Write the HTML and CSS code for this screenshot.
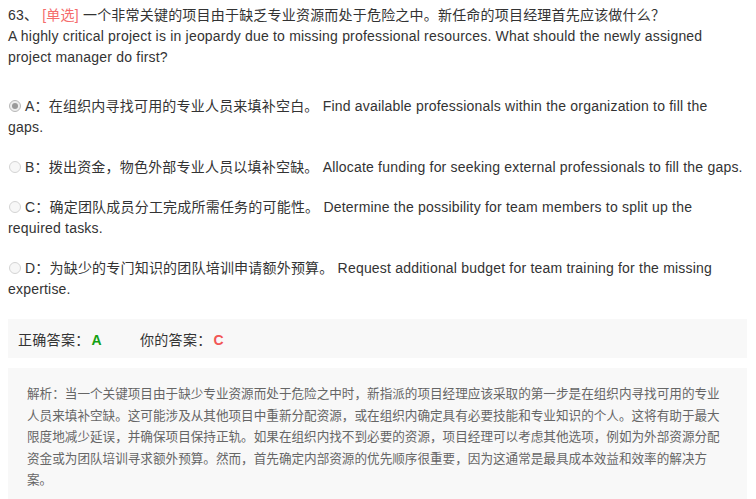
FILE: index.html
```html
<!DOCTYPE html>
<html lang="zh">
<head>
<meta charset="utf-8">
<link rel="stylesheet" href="styles.css">
</head>
<body>
<div class="question">
  <div class="stem">63、 <span class="tag">[单选]</span> 一个非常关键的项目由于缺乏专业资源而处于危险之中。新任命的项目经理首先应该做什么？<br>A highly critical project is in jeopardy due to missing professional resources. What should the newly assigned project manager do first?</div>
  <div class="options">
    <div class="option"><span class="radio checked"></span>A：在组织内寻找可用的专业人员来填补空白。 Find available professionals within the organization to fill the gaps.</div>
    <div class="option"><span class="radio"></span>B：拨出资金，物色外部专业人员以填补空缺。 Allocate funding for seeking external professionals to fill the gaps.</div>
    <div class="option"><span class="radio"></span>C：确定团队成员分工完成所需任务的可能性。 Determine the possibility for team members to split up the required tasks.</div>
    <div class="option"><span class="radio"></span>D：为缺少的专门知识的团队培训申请额外预算。 Request additional budget for team training for the missing expertise.</div>
  </div>
  <div class="answer">
    <span class="ans-item">正确答案：<b class="correct">A</b></span>
    <span class="ans-item">你的答案：<b class="wrong">C</b></span>
  </div>
  <div class="analysis">解析：当一个关键项目由于缺少专业资源而处于危险之中时，新指派的项目经理应该采取的第一步是在组织内寻找可用的专业人员来填补空缺。这可能涉及从其他项目中重新分配资源，或在组织内确定具有必要技能和专业知识的个人。这将有助于最大限度地减少延误，并确保项目保持正轨。如果在组织内找不到必要的资源，项目经理可以考虑其他选项，例如为外部资源分配资金或为团队培训寻求额外预算。然而，首先确定内部资源的优先顺序很重要，因为这通常是最具成本效益和效率的解决方案。</div>
</div>
</body>
</html>
```

FILE: styles.css
```css
html, body {
  margin: 0;
  padding: 0;
  background: #fff;
}
body {
  padding: 5px 8px 0 8px;
  font-family: "Liberation Sans", Arial, "Noto Sans CJK SC", sans-serif;
  font-size: 14px;
  letter-spacing: 0.2px;
  color: #333;
}
.question {
  width: 740px;
}
.stem {
  line-height: 21px;
}
.tag {
  color: #f56c6c;
}
.options {
  margin-top: 28px;
  width: 736px;
  display: flex;
  flex-direction: column;
  gap: 19px;
}
.option {
  line-height: 21px;
}
.radio {
  display: inline-block;
  box-sizing: border-box;
  width: 12px;
  height: 12px;
  border: 1px solid #d4d4d4;
  border-radius: 50%;
  background: #f7f7f7;
  margin: 0 4px 0 1px;
  vertical-align: -1px;
  position: relative;
}
.radio.checked {
  border-color: #b8b8b8;
  background: #eee;
}
.radio.checked::after {
  content: "";
  position: absolute;
  left: 2px;
  top: 2px;
  width: 6px;
  height: 6px;
  border-radius: 50%;
  background: #9a9a9a;
}
.answer {
  margin-top: 19px;
  background: #f8f8f8;
  height: 39px;
  width: 739px;
  display: flex;
  align-items: center;
  padding-left: 10px;
  box-sizing: border-box;
  letter-spacing: 0.3px;
}
.ans-item {
  width: 122px;
}
.correct {
  color: #13a013;
  margin-left: 2px;
}
.wrong {
  color: #f25555;
  margin-left: 2px;
}
.analysis {
  margin-top: 10px;
  background: #f8f8f8;
  width: 739px;
  box-sizing: border-box;
  padding: 16px 20px 10px 19px;
  font-size: 12.6px;
  letter-spacing: 0;
  line-height: 21.5px;
  color: #666;
}
```
